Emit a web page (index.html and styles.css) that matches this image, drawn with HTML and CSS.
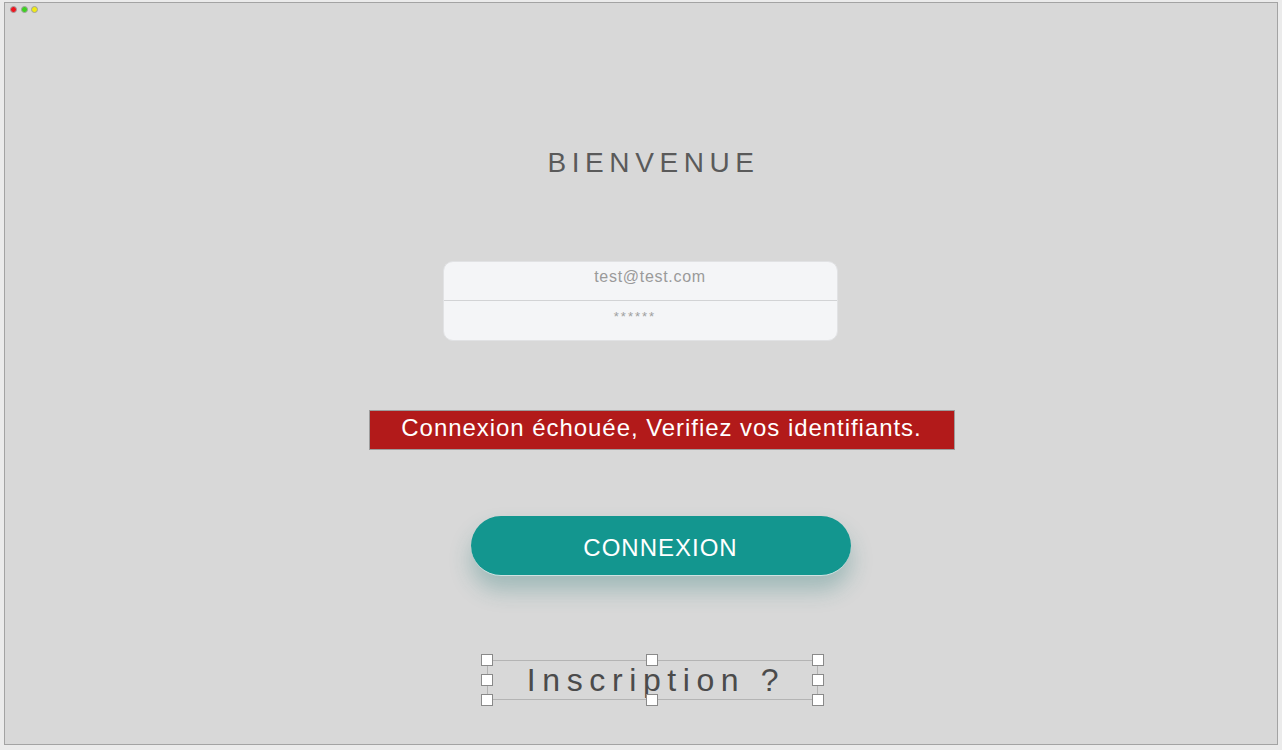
FILE: index.html
```html
<!DOCTYPE html>
<html lang="fr">
<head>
<meta charset="utf-8">
<title>Bienvenue</title>
<link rel="stylesheet" href="styles.css">
</head>
<body>
<div class="window">
  <div class="traffic">
    <span class="dot red"></span>
    <span class="dot green"></span>
    <span class="dot yellow"></span>
  </div>
  <main class="content">
    <h1 class="title">BIENVENUE</h1>
    <div class="fields">
      <div class="field field-email">test@test.com</div>
      <div class="field field-pass">******</div>
    </div>
    <div class="error">Connexion échouée, Verifiez vos identifiants.</div>
    <button class="btn">CONNEXION</button>
    <div class="signup">
      <span class="signup-text">Inscription ?</span>
      <span class="handle h-tl"></span>
      <span class="handle h-tm"></span>
      <span class="handle h-tr"></span>
      <span class="handle h-ml"></span>
      <span class="handle h-mr"></span>
      <span class="handle h-bl"></span>
      <span class="handle h-bm"></span>
      <span class="handle h-br"></span>
    </div>
  </main>
</div>
</body>
</html>
```
FILE: styles.css
```css
html, body {
  margin: 0;
  padding: 0;
}
body {
  background: #ebebeb;
  font-family: "Liberation Sans", Arial, sans-serif;
  padding: 2px 4px 0 4px;
  height: 750px;
  box-sizing: border-box;
  overflow: hidden;
}
.window {
  position: relative;
  width: 1274px;
  height: 743px;
  box-sizing: border-box;
  border: 1px solid #a3a3a3;
  background: #d8d8d8;
}
.traffic {
  position: absolute;
  top: 3px;
  left: 5px;
  display: flex;
  gap: 3.5px;
}
.dot {
  width: 7px;
  height: 7px;
  border-radius: 50%;
  border: 1px solid #a0a0a0;
  box-sizing: border-box;
}
.red { background: #f0141e; }
.green { background: #3cd21e; }
.yellow { background: #f0eb14; }

.content {
  display: flex;
  flex-direction: column;
  align-items: center;
  padding-top: 144px;
}
.title {
  margin: 0 0 0 25px;
  font-weight: normal;
  font-size: 28px;
  line-height: 32px;
  letter-spacing: 5.6px;
  color: #5a5a5a;
}
.fields {
  margin: 82px 2px 0 0;
  width: 395px;
  height: 80px;
  box-sizing: border-box;
  background: #f4f5f7;
  border: 1px solid #e1e2e4;
  border-radius: 10px;
  display: flex;
  flex-direction: column;
  overflow: hidden;
}
.field {
  color: #9a9a9a;
  text-align: center;
}
.field-email {
  height: 39px;
  box-sizing: border-box;
  border-bottom: 1px solid #d2d3d5;
  font-size: 16px;
  letter-spacing: 0.7px;
  line-height: 20px;
  padding: 5px 0 0 20px;
}
.field-pass {
  font-size: 13px;
  letter-spacing: 2px;
  line-height: 14px;
  padding: 9px 10px 0 0;
  color: #a0a0a0;
}
.error {
  margin: 69px 0 0 41px;
  width: 586px;
  height: 40px;
  box-sizing: border-box;
  background: #b21a1a;
  border: 1px solid #9c9c9c;
  color: #ffffff;
  font-size: 24px;
  letter-spacing: 0.95px;
  line-height: 34px;
  text-align: center;
}
.btn {
  margin: 66px 0 0 39px;
  width: 380px;
  height: 60px;
  border: none;
  border-bottom: 1px solid #cfe3e2;
  border-radius: 30px;
  background: #13968f;
  color: #ffffff;
  font-family: "Liberation Sans", Arial, sans-serif;
  font-size: 24px;
  letter-spacing: 1px;
  padding: 5px 0 0 0;
  box-shadow: 0 14px 22px rgba(40, 120, 118, 0.32);
}
.signup {
  position: relative;
  margin: 84px 0 0 23px;
  width: 331px;
  height: 40px;
  box-sizing: border-box;
  border: 1px solid #b4b4b4;
  text-align: center;
  line-height: 38px;
}
.signup-text {
  font-size: 32px;
  letter-spacing: 6.6px;
  color: #4b4b4b;
  padding-left: 7px;
}
.handle {
  position: absolute;
  width: 12px;
  height: 12px;
  box-sizing: border-box;
  background: #ffffff;
  border: 1px solid #8a8a8a;
}
.h-tl { left: -7px; top: -7px; }
.h-tm { left: 158px; top: -7px; }
.h-tr { right: -7px; top: -7px; }
.h-ml { left: -7px; top: 13px; }
.h-mr { right: -7px; top: 13px; }
.h-bl { left: -7px; bottom: -7px; }
.h-bm { left: 158px; bottom: -7px; }
.h-br { right: -7px; bottom: -7px; }
```
